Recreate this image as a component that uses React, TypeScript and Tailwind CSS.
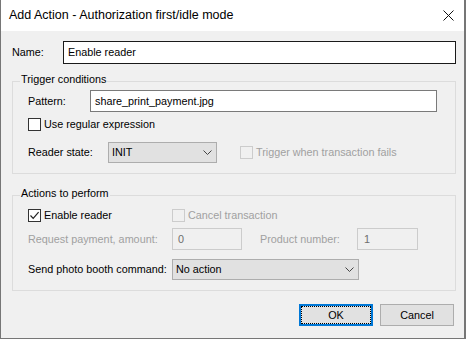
import type { ReactNode } from "react";

// Windows-style dialog: "Add Action - Authorization first/idle mode"

const FONT = "font-['Liberation_Sans',Arial,sans-serif]";

function CheckBox({
  label,
  checked = false,
  disabled = false,
}: {
  label: string;
  checked?: boolean;
  disabled?: boolean;
}) {
  return (
    <div className="flex h-[13px] items-center">
      <span
        className={
          disabled
            ? "flex h-[13px] w-[13px] shrink-0 items-center justify-center border border-[#cccccc] bg-[#f0f0f0]"
            : "flex h-[13px] w-[13px] shrink-0 items-center justify-center border border-[#333333] bg-white"
        }
      >
        {checked && (
          <svg width="11" height="11" viewBox="0 0 11 11">
            <path d="M1.5 5.5 L4.2 8.3 L9.6 2.2" fill="none" stroke="#222" strokeWidth="1.2" />
          </svg>
        )}
      </span>
      <span className={disabled ? "ml-[3px] whitespace-nowrap text-[#a0a0a0]" : "ml-[3px] whitespace-nowrap text-black"}>
        {label}
      </span>
    </div>
  );
}

function Combo({ value, width }: { value: string; width: string }) {
  return (
    <div
      className={`flex h-[21px] items-center justify-between border border-[#adadad] bg-[#e1e1e1] pl-[3px] pr-[4px] ${width}`}
    >
      <span>{value}</span>
      <svg width="9" height="5" viewBox="0 0 9 5">
        <path d="M0.5 0.5 L4.5 4.5 L8.5 0.5" fill="none" stroke="#444" strokeWidth="1" />
      </svg>
    </div>
  );
}

function Group({ title, children }: { title: string; children: ReactNode }) {
  return (
    <fieldset className="ml-[11px] w-[444px] border border-[#dcdcdc] pb-[10px]">
      <legend className="ml-[7px] px-[1px] pb-[3px] leading-[13px]">{title}</legend>
      <div className="pl-[15px]">{children}</div>
    </fieldset>
  );
}

export default function App() {
  return (
    <div
      className={`flex h-[339px] w-[466px] flex-col border-b border-l border-r-2 border-[#767676] bg-[#f0f0f0] text-[10.8px] leading-[13px] text-black ${FONT}`}
    >
      {/* title bar */}
      <div className="flex h-[31px] shrink-0 items-center justify-between bg-white pl-[8px] pr-[10px]">
        <span className="text-[12.5px] text-black">Add Action - Authorization first/idle mode</span>
        <svg width="11" height="11" viewBox="0 0 11 11">
          <path d="M0.5 0.5 L10.5 10.5 M10.5 0.5 L0.5 10.5" stroke="#111" strokeWidth="1" />
        </svg>
      </div>

      {/* name */}
      <div className="mt-[10px] flex h-[23px] items-center pl-[11px]">
        <span className="w-[51px]">Name:</span>
        <div className="flex h-[23px] w-[393px] items-center border border-[#1a1a1a] bg-white pl-[4px]">
          Enable reader
        </div>
      </div>

      <div className="mt-[9px]">
        <Group title="Trigger conditions">
          <div className="mt-[1px] flex h-[22px] items-center">
            <span className="w-[62px]">Pattern:</span>
            <div className="flex h-[22px] w-[347px] items-center border border-[#7a7a7a] bg-white pl-[4px]">
              share_print_payment.jpg
            </div>
          </div>
          <div className="mt-[6px]">
            <CheckBox label="Use regular expression" />
          </div>
          <div className="mt-[11px] flex h-[21px] items-center">
            <span className="w-[80px]">Reader state:</span>
            <Combo value="INIT" width="w-[109px]" />
            <div className="ml-[23px]">
              <CheckBox label="Trigger when transaction fails" disabled />
            </div>
          </div>
        </Group>
      </div>

      <div className="mt-[13px]">
        <Group title="Actions to perform">
          <div className="mt-[6px] flex">
            <div className="w-[144px]">
              <CheckBox label="Enable reader" checked />
            </div>
            <CheckBox label="Cancel transaction" disabled />
          </div>
          <div className="mt-[6px] flex h-[22px] items-center">
            <span className="w-[144px] text-[#a0a0a0]">Request payment, amount:</span>
            <div className="flex h-[22px] w-[70px] items-center border border-[#cccccc] bg-[#f0f0f0] pl-[5px] text-[#6d6d6d]">
              0
            </div>
            <span className="ml-[18px] w-[97px] text-[#a0a0a0]">Product number:</span>
            <div className="flex h-[22px] w-[61px] items-center border border-[#cccccc] bg-[#f0f0f0] pl-[6px] text-[#6d6d6d]">
              1
            </div>
          </div>
          <div className="mt-[9px] flex h-[21px] items-center">
            <span className="w-[144px]">Send photo booth command:</span>
            <Combo value="No action" width="w-[187px]" />
          </div>
        </Group>
      </div>

      {/* buttons */}
      <div className="mt-[13px] flex justify-end gap-[7px] pr-[10px]">
        <button className="h-[22px] w-[74px] border-2 border-[#0078d7] bg-[#e1e1e1] p-0">
          <div className="flex h-full w-full items-center justify-center border border-dotted border-black">
            OK
          </div>
        </button>
        <button className="flex h-[22px] w-[74px] items-center justify-center border border-[#adadad] bg-[#e1e1e1]">
          Cancel
        </button>
      </div>
    </div>
  );
}
